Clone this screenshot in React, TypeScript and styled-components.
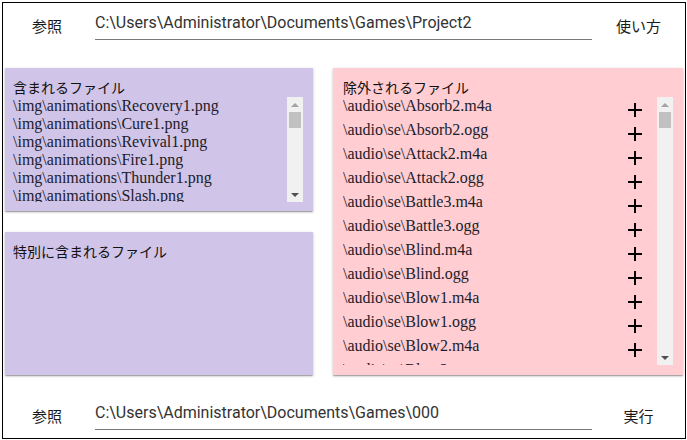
import React from 'react';
import styled, { createGlobalStyle } from 'styled-components';

const GlobalStyle = createGlobalStyle`
  html, body {
    margin: 0;
    padding: 0;
    background: #fff;
  }
  body {
    font-family: "Noto Sans CJK JP", "Noto Sans", sans-serif;
  }
`;

const Frame = styled.div`
  box-sizing: border-box;
  width: 684px;
  height: 437px;
  margin: 2px 0 0 2px;
  border: 1px solid #000;
  display: flex;
  flex-direction: column;
`;

const PathBar = styled.div<{ $top: number }>`
  display: flex;
  align-items: center;
  height: 30px;
  margin-top: ${(p) => p.$top}px;
`;

const LinkButton = styled.button<{ $width?: number }>`
  border: none;
  background: none;
  padding: 0;
  font-family: "Noto Sans CJK JP", sans-serif;
  font-size: 15px;
  color: #1a1a1a;
  cursor: pointer;
  ${(p) => (p.$width ? `width: ${p.$width}px; padding-right: 4px;` : 'flex: 1;')}
`;

const PathField = styled.input`
  box-sizing: border-box;
  width: 497px;
  height: 30px;
  padding: 0 0 4px;
  border: none;
  border-bottom: 1px solid #7a7a7a;
  background: transparent;
  font-family: Roboto, "Liberation Sans", sans-serif;
  font-size: 16px;
  color: #333;
  outline: none;
`;

const Panels = styled.div`
  display: grid;
  grid-template-columns: 308px 350px;
  column-gap: 20px;
  margin: 28px 0 0 2px;
  height: 307px;
`;

const Column = styled.div`
  display: grid;
  grid-template-rows: 143px 143px;
  row-gap: 21px;
`;

const Card = styled.section<{ $tone: 'include' | 'exclude' }>`
  box-sizing: border-box;
  display: flex;
  flex-direction: column;
  padding: ${(p) => (p.$tone === 'include' ? '10px 10px 9px 8px' : '10px 10px 10px 10px')};
  background: ${(p) => (p.$tone === 'include' ? '#d1c4e9' : '#ffcdd2')};
  box-shadow: 0 1px 3px rgba(0, 0, 0, 0.2), 0 1px 1px rgba(0, 0, 0, 0.14),
    0 2px 1px -1px rgba(0, 0, 0, 0.12);
  min-height: 0;
`;

const CardTitle = styled.h2`
  margin: 0;
  height: 19px;
  font-family: "Noto Sans CJK JP", sans-serif;
  font-weight: normal;
  font-size: 14px;
  line-height: 19px;
  color: #111;
`;

const ListBox = styled.div`
  flex: 1;
  min-height: 0;
  display: flex;
`;

const FileList = styled.ul`
  flex: 1;
  min-width: 0;
  margin: 0;
  padding: 0;
  list-style: none;
  overflow: hidden;
  font-family: "Liberation Serif", "Times New Roman", serif;
  font-size: 16px;
  color: #1c1c2a;
`;

// windows-style scroll rail drawn beside the list
const Rail = styled.div`
  width: 16px;
  flex: none;
  display: flex;
  flex-direction: column;
  align-items: center;
  background: #f1f1f1;
`;

const RailArrow = styled.div<{ $dir: 'up' | 'down' }>`
  height: 15px;
  width: 100%;
  display: flex;
  align-items: center;
  justify-content: center;
  &::before {
    content: '';
    width: 0;
    height: 0;
    border-left: 4px solid transparent;
    border-right: 4px solid transparent;
    ${(p) =>
      p.$dir === 'up'
        ? 'border-bottom: 4px solid #a3a3a3;'
        : 'border-top: 4px solid #505050;'}
  }
`;

const RailThumb = styled.div`
  width: 12px;
  height: 16px;
  background: #c1c1c1;
`;

const RailSpace = styled.div`
  flex: 1;
`;

function ScrollRail() {
  return (
    <Rail>
      <RailArrow $dir="up" />
      <RailThumb />
      <RailSpace />
      <RailArrow $dir="down" />
    </Rail>
  );
}

const FileItem = styled.li`
  line-height: 18px;
  white-space: nowrap;
`;

const ExcludedItem = styled.li`
  display: flex;
  align-items: flex-start;
  justify-content: space-between;
  height: 24px;
  line-height: 18px;
  padding-right: 10px;
  white-space: nowrap;
`;

const AddButton = styled.button`
  display: flex;
  align-items: center;
  justify-content: center;
  width: 24px;
  height: 24px;
  margin-top: 1px;
  padding: 0;
  border: none;
  background: none;
  cursor: pointer;
`;

function PlusIcon() {
  return (
    <svg width="14" height="14" viewBox="0 0 14 14">
      <path d="M7 0v14M0 7h14" stroke="#000" strokeWidth="2" fill="none" />
    </svg>
  );
}

const animations = [
  'Recovery1', 'Cure1', 'Revival1', 'Fire1', 'Thunder1', 'Slash', 'Hit1',
  'Hit2', 'Ice1', 'Wind1', 'Darkness1', 'Light1', 'Heal1', 'Absorb1',
].map((n) => `\\img\\animations\\${n}.png`);

const seNames = [
  'Absorb2', 'Attack2', 'Battle3', 'Blind', 'Blow1', 'Blow2', 'Blow3', 'Bow1',
  'Bow2', 'Bow3', 'Break', 'Breath', 'Buzzer1', 'Cancel1', 'Chicken',
];

const excluded = seNames.flatMap((n) => [
  `\\audio\\se\\${n}.m4a`,
  `\\audio\\se\\${n}.ogg`,
]);

export default function App() {
  return (
    <>
      <GlobalStyle />
      <Frame>
        <PathBar $top={7}>
          <LinkButton $width={92}>参照</LinkButton>
          <PathField
            readOnly
            value="C:\Users\Administrator\Documents\Games\Project2"
          />
          <LinkButton>使い方</LinkButton>
        </PathBar>

        <Panels>
          <Column>
            <Card $tone="include">
              <CardTitle>含まれるファイル</CardTitle>
              <ListBox>
                <FileList>
                  {animations.map((f) => (
                    <FileItem key={f}>{f}</FileItem>
                  ))}
                </FileList>
                <ScrollRail />
              </ListBox>
            </Card>
            <Card $tone="include">
              <CardTitle>特別に含まれるファイル</CardTitle>
            </Card>
          </Column>
          <Card $tone="exclude">
            <CardTitle>除外されるファイル</CardTitle>
            <ListBox>
              <FileList>
                {excluded.map((f) => (
                  <ExcludedItem key={f}>
                    <span>{f}</span>
                    <AddButton>
                      <PlusIcon />
                    </AddButton>
                  </ExcludedItem>
                ))}
              </FileList>
              <ScrollRail />
            </ListBox>
          </Card>
        </Panels>

        <PathBar $top={25}>
          <LinkButton $width={92}>参照</LinkButton>
          <PathField
            readOnly
            value="C:\Users\Administrator\Documents\Games\000"
          />
          <LinkButton>実行</LinkButton>
        </PathBar>
      </Frame>
    </>
  );
}
